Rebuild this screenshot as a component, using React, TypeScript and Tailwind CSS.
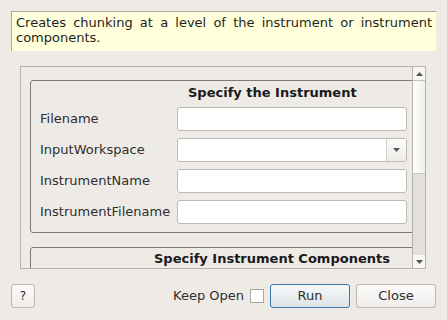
const rows = ['Filename', 'InputWorkspace', 'InstrumentName', 'InstrumentFilename']

function TriUp() {
  return (
    <svg width="7" height="4" viewBox="0 0 7 4">
      <path d="M0 4 L3.5 0 L7 4 Z" fill="#555" />
    </svg>
  )
}

function TriDown() {
  return (
    <svg width="7" height="4" viewBox="0 0 7 4">
      <path d="M0 0 L7 0 L3.5 4 Z" fill="#555" />
    </svg>
  )
}

function Field({ combo }: { combo?: boolean }) {
  return (
    <div className="flex h-[24px] w-[230px] rounded-[3px] border border-[#bdbab5] bg-white">
      <div className="flex-1" />
      {combo && (
        <div className="flex w-[20px] items-center justify-center border-l border-[#cfccc7] bg-gradient-to-b from-[#fbfbfa] to-[#eeece9]">
          <TriDown />
        </div>
      )}
    </div>
  )
}

export default function App() {
  return (
    <div
      className="relative h-[320px] w-[447px] overflow-hidden bg-[#eeebe7] text-[13px] text-[#2e2e2e]"
      style={{ fontFamily: '"DejaVu Sans", sans-serif' }}
    >
      <div className="ml-[11px] mt-[11px] h-[40px] w-[425px] border-l border-t border-[#a9a79f] border-b-[#fdfdf0] border-r-[#fdfdf0] bg-[#ffffdc] px-[4px] pt-[3px] text-justify leading-[15px] text-[#1f1f1f]">
        Creates chunking at a level of the instrument or instrument components.
      </div>

      <div className="ml-[20px] mt-[15px] flex h-[203px] w-[406px] border border-[#b6b3ae]">
        <div className="w-[391px] overflow-hidden">
          <div className="ml-[9px] mt-[13px] w-[395px] rounded-[3px] border border-[#7c7b79] pb-[8px] pl-[9px] pr-[17px]">
            <div className="mb-[6px] pl-[148px] pt-[4px] text-[13px] font-bold leading-[16px] text-[#1a1a1a]">
              Specify the Instrument
            </div>
            <div className="flex flex-col gap-[7px]">
              {rows.map((r, i) => (
                <div key={r} className="flex items-center justify-between">
                  <span className="leading-[16px]">{r}</span>
                  <Field combo={i === 1} />
                </div>
              ))}
            </div>
          </div>
          <div className="ml-[9px] mt-[14px] h-[40px] w-[395px] rounded-[3px] border border-[#7c7b79] pl-[123px] pt-[3px]">
            <div className="font-bold leading-[16px] text-[#1a1a1a]">Specify Instrument Components</div>
          </div>
        </div>
        <div className="flex w-[13px] flex-col border-l border-[#b6b3ae]">
          <div className="flex h-[14px] items-center justify-center border-b border-[#c4c1bc] bg-[#f7f6f4]">
            <TriUp />
          </div>
          <div className="h-[92px] bg-gradient-to-r from-[#ffffff] to-[#efeeec]" />
          <div className="flex-1 border-t border-[#c9c6c1] bg-[#e2e0dc]" />
          <div className="flex h-[13px] items-center justify-center bg-[#f7f6f4]">
            <TriDown />
          </div>
        </div>
      </div>

      <div className="mt-[15px] flex items-center px-[11px]">
        <button className="flex h-[24px] w-[24px] items-center justify-center rounded-[3px] border border-[#bab7b2] bg-gradient-to-b from-[#fbfbfa] to-[#efedea] text-[12px]">
          ?
        </button>
        <div className="flex-1" />
        <span className="leading-[16px]">Keep Open</span>
        <span className="ml-[6px] h-[14px] w-[14px] border border-[#a8a59f] bg-white" />
        <button className="ml-[6px] h-[24px] w-[80px] rounded-[3px] border border-[#3a78ab] bg-gradient-to-b from-[#f6f8f9] to-[#dfe4e8] leading-[16px]">
          Run
        </button>
        <button className="ml-[6px] h-[24px] w-[80px] rounded-[3px] border border-[#bab7b2] bg-gradient-to-b from-[#fbfbfa] to-[#efedea] leading-[16px]">
          Close
        </button>
      </div>
    </div>
  )
}
